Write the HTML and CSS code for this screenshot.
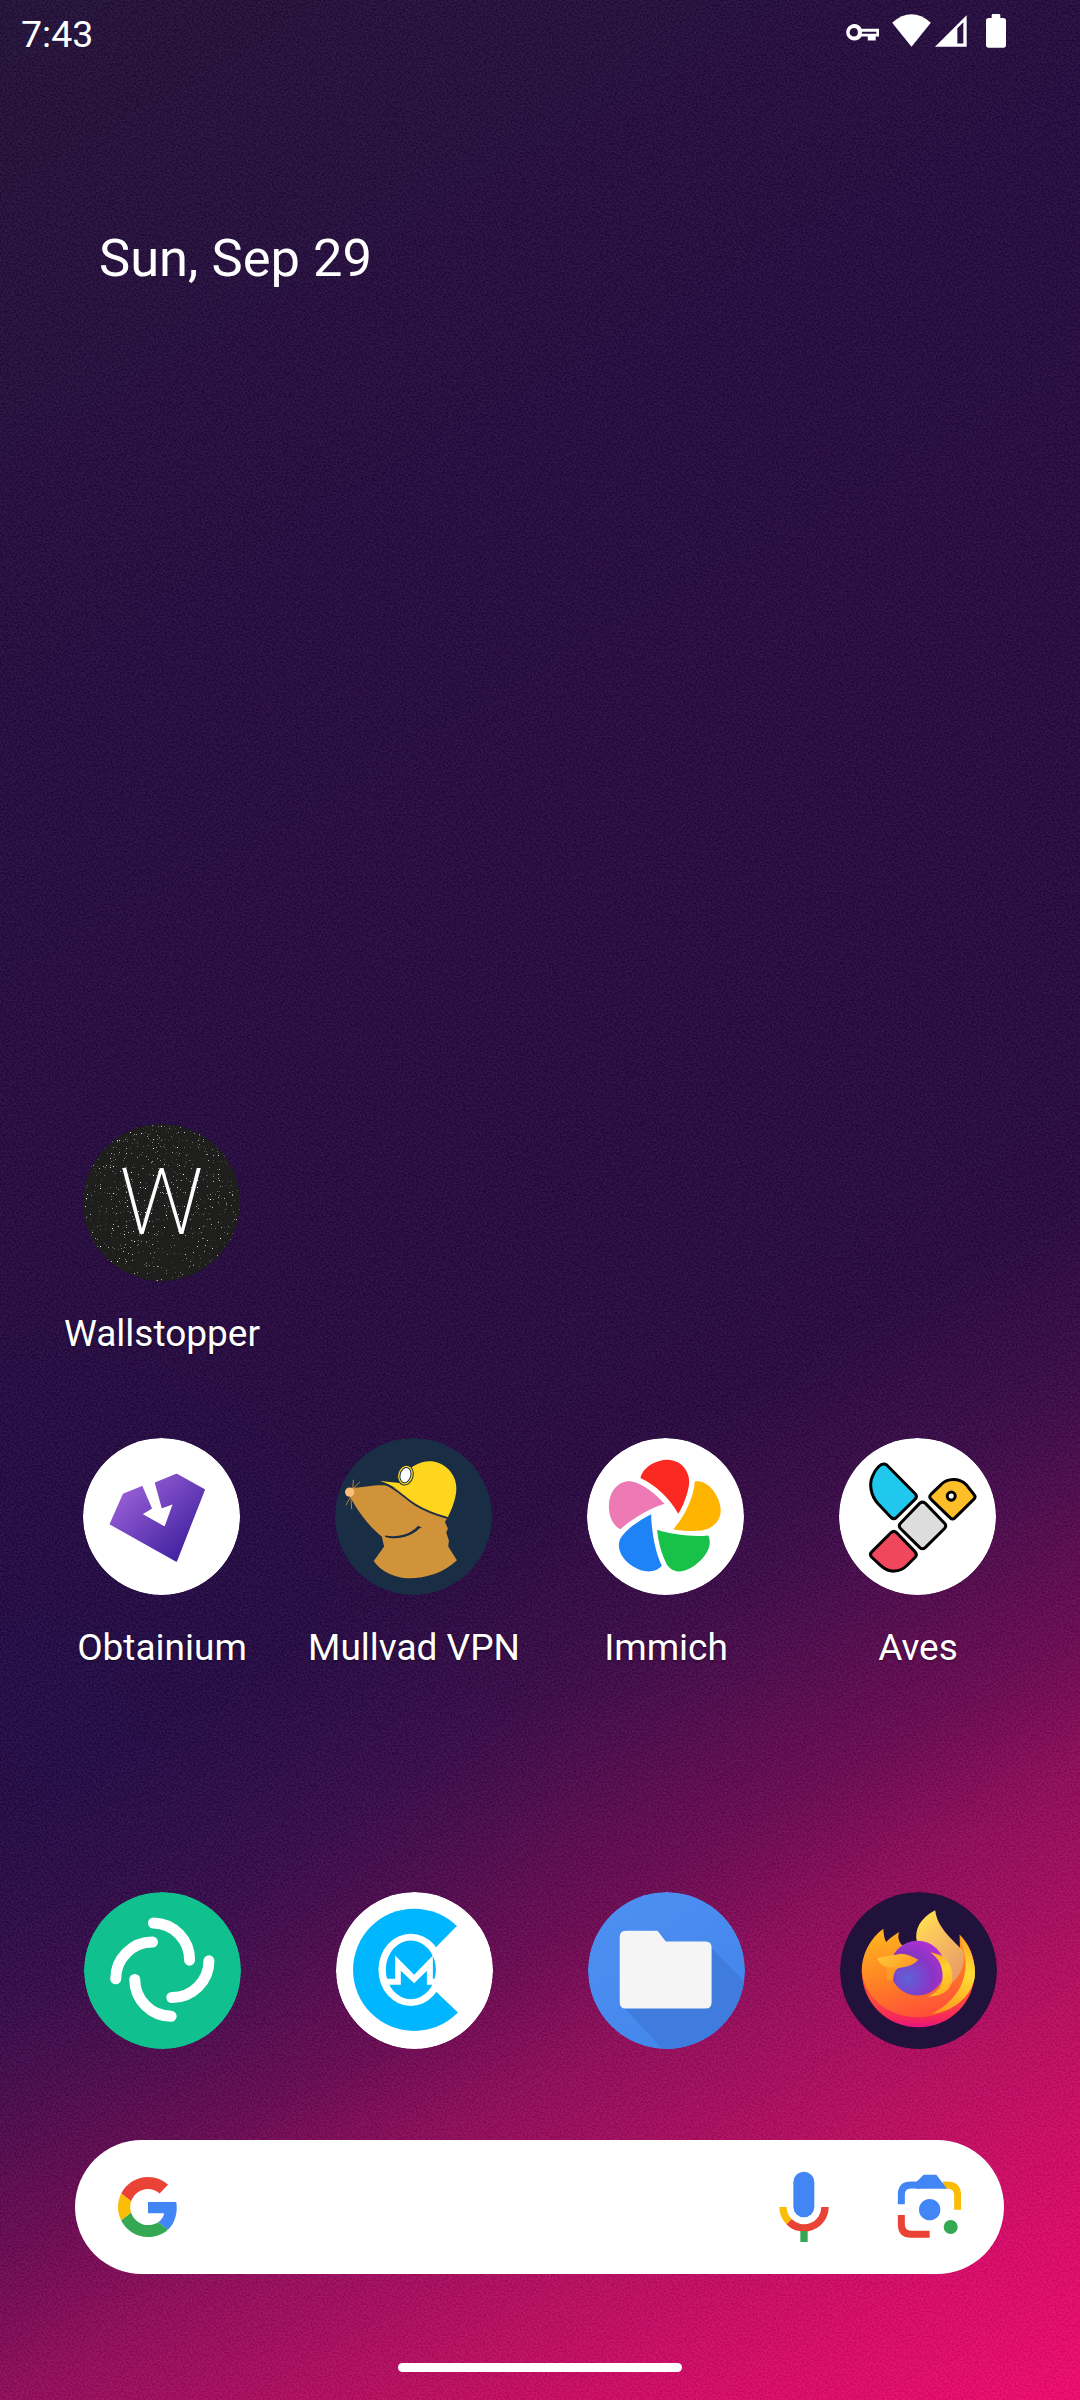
FILE: index.html
```html
<!DOCTYPE html>
<html lang="en">
<head>
<meta charset="utf-8">
<title>Home screen</title>
<link rel="stylesheet" href="styles.css">
</head>
<body>
<main class="screen">
  <svg class="grain" width="1080" height="2400" aria-hidden="true">
    <filter id="grain-f" x="0" y="0" width="100%" height="100%">
      <feTurbulence type="fractalNoise" baseFrequency="0.55" numOctaves="2" seed="7" stitchTiles="stitch"/>
      <feColorMatrix type="matrix" values="3.2 0 0 0 -1.35  3.2 0 0 0 -1.35  3.2 0 0 0 -1.35  0 0 0 0 0.055"/>
    </filter>
    <rect width="1080" height="2400" filter="url(#grain-f)"/>
  </svg>

  <header class="statusbar">
    <span class="clock">7:43</span>
    <div class="status-icons">
      <svg class="si-key" width="33" height="34" viewBox="78 42 100 102"><path fill="#fff" fill-rule="evenodd" d="M102 72a25 25 0 0 1 23 14h53v24h-10v12h-24v-12h-19a25 25 0 1 1-23-38zm0 12a12 12 0 1 0 0 26 12 13 0 0 0 0-26zm24 11a25 25 0 0 1 0 6h44v-6z"/></svg>
      <svg class="si-wifi" width="39" height="33" viewBox="216 42 116 99"><path fill="#fff" d="M274 140 216 68Q274 18 332 68Z"/></svg>
      <svg class="si-signal" width="32" height="32" viewBox="345 45 96 95"><path fill="#fff" fill-rule="evenodd" d="M345 140 440 45V140ZM412 84V130H430V66Z"/></svg>
      <svg class="si-battery" width="20" height="34" viewBox="498 42 60 102"><path fill="#fff" d="M515 46a4 4 0 0 1 4-4h18a4 4 0 0 1 4 4v8h9a8 8 0 0 1 8 8v73a8 8 0 0 1-8 8h-44a8 8 0 0 1-8-8V62a8 8 0 0 1 8-8h9z"/></svg>
    </div>
  </header>

  <p class="date">Sun, Sep 29</p>

  <section class="workspace">
    <a class="app">
      <span class="icon icon-wall">
        <svg class="specks" width="157" height="157" aria-hidden="true">
          <filter id="speck-f" x="0" y="0" width="100%" height="100%">
            <feTurbulence type="fractalNoise" baseFrequency="0.85" numOctaves="2" seed="11"/>
            <feColorMatrix type="matrix" values="0 0 0 0 1  0 0 0 0 1  0 0 0 0 1  7 0 0 0 -4.9"/>
          </filter>
          <rect width="157" height="157" filter="url(#speck-f)"/>
        </svg>
        <span class="wall-letter">W</span>
      </span>
      <span class="label">Wallstopper</span>
    </a>
    <span></span><span></span><span></span>

    <a class="app">
      <span class="icon">
        <svg width="157" height="157" viewBox="70 55 470 470">
          <defs><linearGradient id="ob" x1="0" y1="0" x2="1" y2="1"><stop offset="0" stop-color="#ab6be2"/><stop offset="1" stop-color="#2f1695"/></linearGradient></defs>
          <circle cx="305" cy="290" r="235" fill="#fff"/>
          <path fill="url(#ob)" stroke="url(#ob)" stroke-width="6" stroke-linejoin="round" d="M153 312 192 224 246 202 273 265 243 283 316 324 343 249 308 262 288 190 350 165 432 210 349 422Z"/>
        </svg>
      </span>
      <span class="label">Obtainium</span>
    </a>
    <a class="app">
      <span class="icon">
        <svg width="157" height="157" viewBox="105 55 470 470">
          <circle cx="340" cy="290" r="235" fill="#192e45"/>
          <path fill="#d0933a" d="M150 205C190 203 235 193 262 198L300 210 445 290 434 306 443 326 438 338 446 362 444 380 470 421C430 460 370 477 320 475 280 472 240 452 221 423L252 380 245 350C205 318 170 270 150 230Z"/>
          <path fill="#192e45" d="M255 347C290 354 330 345 354 318L365 324 357 326C335 350 290 362 255 351Z"/>
          <path fill="#ffd61e" d="M240 184 298 190C318 140 365 120 400 125 450 135 475 180 467 222 462 252 450 278 443 291 400 280 345 255 310 224 290 205 265 192 240 184Z"/>
          <path fill="none" stroke="#192e45" stroke-width="5" d="M258 194C290 208 310 232 345 255 375 274 410 286 443 295"/>
          <ellipse cx="316" cy="166" rx="23" ry="30" transform="rotate(15 316 166)" fill="#ffd61e" stroke="#192e45" stroke-width="3"/>
          <ellipse cx="316" cy="166" rx="16" ry="23" transform="rotate(15 316 166)" fill="#fff" stroke="#192e45" stroke-width="3"/>
          <path fill="none" stroke="#d0933a" stroke-width="2.5" d="M160 180 158 215M180 186 150 215M138 256 158 218M155 268 152 220"/>
          <circle cx="149" cy="217" r="14" fill="#fdbd7d"/>
        </svg>
      </span>
      <span class="label">Mullvad VPN</span>
    </a>
    <a class="app">
      <span class="icon">
        <svg width="157" height="157" viewBox="22 25 470 470">
          <circle cx="257" cy="260" r="235" fill="#fff"/>
          <path fill="#fa2921" d="M182 145C190 110 230 90 265 90 305 92 330 125 328 160 325 190 310 230 295 252 270 205 225 165 182 145Z"/>
          <path fill="#ffb400" d="M345 155C375 150 410 180 420 225 430 265 405 295 365 302 335 305 305 303 280 298 310 265 340 210 345 155Z"/>
          <path fill="#18c249" d="M232 300C280 315 340 322 385 317 400 350 375 385 340 410 310 430 280 430 262 405 245 375 235 335 232 300Z"/>
          <path fill="#1e83f7" d="M214 253C215 300 225 365 246 407 230 430 190 430 160 410 130 390 110 360 120 330 135 300 180 270 214 253Z"/>
          <path fill="#ed79b5" d="M254 222C210 235 160 265 122 298 95 285 85 250 88 220 92 180 120 150 155 155 190 160 230 195 254 222Z"/>
        </svg>
      </span>
      <span class="label">Immich</span>
    </a>
    <a class="app">
      <span class="icon">
        <svg width="157" height="157" viewBox="808 55 470 470">
          <circle cx="1043" cy="290" r="235" fill="#fff"/>
          <g stroke="#000" stroke-width="9" stroke-linejoin="round">
            <path fill="#1fc8ec" d="M951 136 1036 222Q1044 230 1036 238L980 293Q972 300 964 293L925 252C902 226 898 192 908 170 916 150 934 124 951 136Z"/>
            <path fill="#fdbe2a" d="M1083 224 1112 196C1132 174 1168 174 1190 196L1212 224Q1219 231 1212 238L1155 294Q1148 301 1141 294L1083 238Q1076 231 1083 224Z"/>
            <path fill="#dddddd" d="M1050 250Q1058 244 1066 250L1124 310Q1131 318 1124 326L1066 383Q1058 390 1050 383L992 326Q985 318 992 310Z"/>
            <path fill="#f0475c" d="M964 338Q972 331 980 338L1036 396Q1043 404 1036 412L1012 436C990 458 958 460 934 438L906 412Q898 404 906 396Z"/>
          </g>
          <circle cx="1144" cy="229" r="12" fill="#fff" stroke="#000" stroke-width="9"/>
        </svg>
      </span>
      <span class="label">Aves</span>
    </a>
  </section>

  <section class="hotseat">
    <span class="icon">
      <svg width="157" height="157" viewBox="72 67 470 470">
        <circle cx="307" cy="302" r="235" fill="#10c08f"/>
        <g fill="none" stroke="#fff" stroke-width="33" stroke-linecap="round">
          <path d="M280 160A110 110 0 0 1 388 271"/>
          <path d="M446 273A110 110 0 0 1 335 383"/>
          <path d="M333 439A110 110 0 0 1 224 329"/>
          <path d="M167 327A110 110 0 0 1 277 217"/>
        </g>
      </svg>
    </span>
    <span class="icon">
      <svg width="157" height="157" viewBox="828 67 470 470">
        <circle cx="1063" cy="302" r="235" fill="#fff"/>
        <circle cx="1062" cy="300" r="183" fill="#00b7ff"/>
        <path fill="#fff" d="M1120 240 1188 170H1290V428H1193L1120 358Z"/>
        <ellipse cx="1052" cy="300" rx="97" ry="108" fill="#fff"/>
        <ellipse cx="1052" cy="300" rx="75" ry="88" fill="#00b7ff"/>
        <path fill="#fff" d="M978 327H1005V257L1062 315 1118 257V327H1146V345H1100V303L1062 340 1022 303V345H965Z"/>
      </svg>
    </span>
    <span class="icon">
      <svg width="157" height="157" viewBox="55 67 470 470">
        <defs>
          <clipPath id="fc"><circle cx="290" cy="302" r="235"/></clipPath>
          <linearGradient id="fb" x1="0" y1="0" x2="0.8" y2="1"><stop offset="0" stop-color="#4f90f2"/><stop offset="1" stop-color="#4285ea"/></linearGradient>
        </defs>
        <circle cx="290" cy="302" r="235" fill="url(#fb)"/>
        <path clip-path="url(#fc)" fill="#3f7cde" d="M425 235 540 350V560H300L160 410Z"/>
        <path fill="#f5f5f5" d="M168 183H263L288 215H407Q425 215 425 233V398Q425 416 407 416H168Q150 416 150 398V201Q150 183 168 183Z"/>
      </svg>
    </span>
    <span class="icon">
      <svg width="157" height="157" viewBox="60 37 470 470">
        <defs>
          <linearGradient id="ffp" x1="0" y1="0" x2="0" y2="1"><stop offset="0.5" stop-color="#ff4a3c"/><stop offset="0.85" stop-color="#f5265c"/><stop offset="1" stop-color="#e3147f"/></linearGradient>
          <linearGradient id="ffb" x1="0.25" y1="0" x2="0.6" y2="1"><stop offset="0" stop-color="#ffb41f"/><stop offset="0.55" stop-color="#ff7d25"/><stop offset="1" stop-color="#ff4c3b"/></linearGradient>
          <linearGradient id="ffl" x1="0.1" y1="0" x2="0.8" y2="1"><stop offset="0" stop-color="#ffe84a"/><stop offset="0.3" stop-color="#fbc95c"/><stop offset="1" stop-color="#e99a68"/></linearGradient>
          <linearGradient id="ffw" x1="0.5" y1="0" x2="0.3" y2="1"><stop offset="0" stop-color="#ffa62a"/><stop offset="0.4" stop-color="#ffde35"/><stop offset="1" stop-color="#ff9a20"/></linearGradient>
          <radialGradient id="ffg" cx="0.32" cy="0.68" r="0.85"><stop offset="0" stop-color="#5e62d6"/><stop offset="0.55" stop-color="#8b34c4"/><stop offset="1" stop-color="#bf2fd6"/></radialGradient>
          <linearGradient id="ffh" x1="0" y1="0" x2="1" y2="0.3"><stop offset="0" stop-color="#ffc93a"/><stop offset="1" stop-color="#ff9c24"/></linearGradient>
          <linearGradient id="fft" x1="0.2" y1="0" x2="0.6" y2="1"><stop offset="0" stop-color="#ffa52a"/><stop offset="0.5" stop-color="#ffd330"/><stop offset="1" stop-color="#ffae22"/></linearGradient>
        </defs>
        <circle cx="295" cy="272" r="235" fill="#20123a"/>
        <path fill="url(#ffp)" d="M125 275C127 370 200 442 295 442 390 442 465 365 463 275Z"/>
        <path fill="url(#ffb)" d="M190 147C150 175 125 225 125 272 130 350 205 412 292 412 380 412 458 360 463 275 462 225 445 190 418 165L420 260 300 200 245 196C236 185 232 172 237 157 225 165 212 172 198 187 192 175 190 160 190 147Z"/>
        <path fill="url(#ffl)" d="M345 92C300 115 282 150 290 186L360 225 392 312C420 290 436 255 429 215 405 185 352 150 345 92Z"/>
        <path fill="url(#ffw)" d="M418 165C450 200 470 250 463 296 450 355 395 395 335 402 395 370 440 320 436 240 432 215 424 190 418 165Z"/>
        <circle cx="292" cy="265" r="82" fill="url(#ffg)"/>
        <path fill="url(#fft)" d="M330 218C372 222 402 252 396 302 390 332 365 350 322 350 352 338 370 318 367 280 364 252 352 232 330 218Z"/>
        <path fill="#ff9a24" d="M200 250 240 262C225 268 220 282 219 300L200 300Z"/>
        <path fill="url(#ffh)" d="M172 236C195 228 215 228 240 222 262 222 280 232 294 240 280 258 255 262 238 264 225 264 212 262 200 262 188 258 176 248 172 236Z"/>
      </svg>
    </span>
  </section>

  <section class="search">
    <svg class="g-logo" width="60" height="62" viewBox="0 0 48 48">
      <path fill="#EA4335" d="M24 9.5c3.54 0 6.71 1.22 9.21 3.6l6.85-6.85C35.9 2.38 30.47 0 24 0 14.62 0 6.51 5.38 2.56 13.22l7.98 6.19C12.43 13.72 17.74 9.5 24 9.5z"/>
      <path fill="#4285F4" d="M46.98 24.55c0-1.57-.15-3.09-.38-4.55H24v9.02h12.94c-.58 2.96-2.26 5.48-4.78 7.18l7.73 6c4.51-4.18 7.09-10.36 7.09-17.65z"/>
      <path fill="#FBBC05" d="M10.53 28.59c-.48-1.45-.76-2.99-.76-4.59s.27-3.14.76-4.59l-7.98-6.19C.92 16.46 0 20.12 0 24c0 3.88.92 7.54 2.56 10.78l7.97-6.19z"/>
      <path fill="#34A853" d="M24 48c6.48 0 11.93-2.13 15.89-5.81l-7.73-6c-2.15 1.45-4.92 2.3-8.16 2.3-6.26 0-11.57-4.22-13.47-9.91l-7.98 6.19C6.51 42.62 14.62 48 24 48z"/>
    </svg>
    <svg class="mic" width="50" height="72" viewBox="87 96 150 216">
      <rect x="130" y="98" width="63" height="137" rx="31.5" fill="#4285f4"/>
      <path fill="none" stroke="#ea4335" stroke-width="22" d="M117 248A63 63 0 0 0 225 204"/>
      <path fill="none" stroke="#fbbc05" stroke-width="22" d="M99 204A63 63 0 0 0 117 248"/>
      <rect x="151" y="276" width="22" height="33" fill="#34a853"/>
    </svg>
    <svg class="lens" width="66" height="66" viewBox="436 106 198 198">
      <g fill="none" stroke-width="21">
        <path stroke="#fbbc05" d="M580 139H592Q624 139 624 171V213"/>
        <path stroke="#4285f4" d="M455 197V168Q455 139 484 139H512"/>
        <path stroke="#ea4335" d="M455 229V257Q455 287 484 287H540"/>
      </g>
      <path fill="#4285f4" d="M522 108H560L592 150H498L500 130Z"/>
      <circle cx="540" cy="213" r="32" fill="#4285f4"/>
      <circle cx="603" cy="265" r="21" fill="#34a853"/>
    </svg>
  </section>

  <div class="home-indicator"></div>
</main>
</body>
</html>
```
FILE: styles.css
```css
* { box-sizing: border-box; }

html, body {
  margin: 0;
  padding: 0;
  background: #210d3a;
}

.screen {
  position: relative;
  width: 1080px;
  height: 2400px;
  overflow: hidden;
  display: flex;
  flex-direction: column;
  font-family: Roboto, "Liberation Sans", sans-serif;
  color: #fff;
  background:
    radial-gradient(ellipse 520px 480px at 60px 1720px, rgba(22, 14, 80, .35), rgba(22, 14, 80, 0)),
    linear-gradient(150deg, #221038 0%, #250a3f 25%, #26083f 50%, #28083f 60%, #3b0a48 66.5%, #6c0952 75%, #8e0b5a 79%, #b90c60 86.6%, #d80968 93%, #f00870 100%);
}

.grain {
  position: absolute;
  inset: 0;
  pointer-events: none;
}

.statusbar {
  position: relative;
  display: flex;
  justify-content: space-between;
  align-items: flex-start;
  height: 66px;
  padding: 13px 74px 0 21px;
}

.clock {
  font-size: 37.5px;
  line-height: 42px;
}

.status-icons {
  display: flex;
  align-items: flex-start;
  margin-top: 1px;
}

.si-wifi { margin-left: 13px; }
.si-signal { margin-left: 4px; margin-top: 1px; }
.si-battery { margin-left: 19px; }

.date {
  position: relative;
  margin: 162px 0 0;
  padding-left: 99px;
  font-size: 52.5px;
  line-height: 60px;
}

.workspace {
  position: relative;
  display: grid;
  grid-template-columns: repeat(4, 252px);
  grid-auto-rows: 314px;
  margin-top: 836px;
  padding-left: 36px;
}

.app {
  display: flex;
  flex-direction: column;
  align-items: center;
}

.icon {
  position: relative;
  display: block;
  flex: none;
  width: 157px;
  height: 157px;
  border-radius: 50%;
  overflow: hidden;
}

.app .icon {
  align-self: flex-start;
  margin-left: 47px;
}

.icon svg { display: block; }

.icon-wall {
  display: flex;
  align-items: center;
  justify-content: center;
  background: #1e1f1d;
}

.specks {
  position: absolute;
  inset: 0;
}

.wall-letter {
  position: relative;
  font-size: 93px;
  font-weight: 200;
  line-height: 1;
  color: #fff;
}

.label {
  margin-top: 31px;
  font-size: 37px;
  line-height: 44px;
  white-space: nowrap;
  text-shadow: 0 1px 3px rgba(0,0,0,.45);
}

.hotseat {
  position: relative;
  display: grid;
  grid-template-columns: repeat(4, 252px);
  margin-top: 140px;
  padding-left: 84px;
}

.search {
  position: relative;
  display: flex;
  align-items: center;
  width: 929px;
  height: 134px;
  margin: 91px 0 0 75px;
  padding-left: 43px;
  border-radius: 67px;
  background: #fff;
}

.mic { margin-left: 601px; }
.lens { margin-left: 66px; }

.home-indicator {
  position: relative;
  align-self: center;
  width: 284px;
  height: 9px;
  margin-top: 89px;
  border-radius: 5px;
  background: #fff;
}
```
